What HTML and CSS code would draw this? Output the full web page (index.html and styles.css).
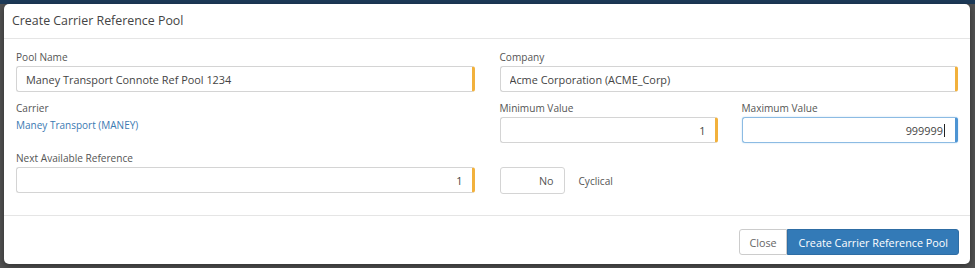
FILE: index.html
```html
<!DOCTYPE html>
<html lang="en">
  <head>
    <meta charset="UTF-8" />
    <title>Create Carrier Reference Pool</title>
    <link rel="stylesheet" href="styles.css">
  </head>
  <body>
    <div class="backdrop-bar"></div>
    <div class="modal">
      <div class="modal-header">
        <h4>Create Carrier Reference Pool</h4>
      </div>
      <form class="modal-body" action="#">
        <div class="col">
          <div class="form-group">
            <label for="pool-name">Pool Name</label>
            <input type="text" id="pool-name" class="required" value="Maney Transport Connote Ref Pool 1234" />
          </div>
          <div class="form-group carrier">
            <label>Carrier</label>
            <a href="#">Maney Transport (MANEY)</a>
          </div>
          <div class="form-group last">
            <label for="next-ref">Next Available Reference</label>
            <input type="text" id="next-ref" class="required num" value="1" />
          </div>
        </div>
        <div class="col">
          <div class="form-group">
            <label for="company">Company</label>
            <input type="text" id="company" class="required" value="Acme Corporation (ACME_Corp)" />
          </div>
          <div class="row">
            <div class="form-group">
              <label for="min-value">Minimum Value</label>
              <input type="text" id="min-value" class="required num" value="1" />
            </div>
            <div class="form-group">
              <label for="max-value">Maximum Value</label>
              <div class="caret-wrap">
                <input type="text" id="max-value" class="required num focused" value="999999" />
                <span class="caret"></span>
              </div>
            </div>
          </div>
          <div class="toggle-row">
            <span class="toggle">No</span>
            <span class="toggle-label">Cyclical</span>
          </div>
        </div>
      </form>
      <div class="modal-footer">
        <button type="button" class="btn">Close</button>
        <button type="button" class="btn btn-primary">Create Carrier Reference Pool</button>
      </div>
    </div>
  </body>
</html>
```

FILE: styles.css
```css
* {
  margin: 0;
  padding: 0;
  box-sizing: border-box;
}

body {
  font-family: "Open Sans", "Liberation Sans", sans-serif;
  background: #515151;
  color: #333;
  height: 268px;
  overflow: hidden;
  padding: 4px 5px 0 4px;
}

.backdrop-bar {
  position: absolute;
  top: 0;
  left: 0;
  right: 0;
  height: 4px;
  background: #1d3a58;
}

.modal {
  position: relative;
  background: #fff;
  border-radius: 5px;
  width: 966px;
  height: 260px;
  box-shadow: 0 2px 6px rgba(0, 0, 0, 0.4);
}

.modal-header {
  height: 35px;
  padding: 8px 8px 0;
  border-bottom: 1px solid #e5e5e5;
}

.modal-header h4 {
  font-size: 12.4px;
  font-weight: 400;
  line-height: 18px;
  color: #444;
}

.modal-body {
  display: grid;
  grid-template-columns: 1fr 1fr;
  column-gap: 25px;
  padding: 10px 12px 21px;
  border-bottom: 1px solid #e5e5e5;
}

.col {
  display: flex;
  flex-direction: column;
}

.form-group {
  display: flex;
  flex-direction: column;
  margin-bottom: 8px;
}

.form-group.last {
  margin-bottom: 0;
}

.form-group label {
  font-size: 10.1px;
  line-height: 16px;
  color: #555;
  margin-bottom: 1px;
}

.form-group input {
  height: 26px;
  width: 100%;
  padding: 0 9px;
  border: 1px solid #d4d4d4;
  border-radius: 3px;
  font-family: inherit;
  font-size: 10.9px;
  color: #444;
  outline: none;
  background: #fff;
}

.form-group input.required {
  border-right: 3px solid #f2b13c;
}

.form-group input.num {
  text-align: right;
}

.form-group input.focused {
  border-color: #8cbbe3;
  border-right-color: #4d94d3;
  padding-right: 12px;
  box-shadow: 0 0 2px rgba(102, 175, 233, 0.4);
}

.caret-wrap {
  position: relative;
}

.caret {
  position: absolute;
  right: 13px;
  top: 7px;
  width: 1px;
  height: 13px;
  background: #222;
}

.carrier {
  margin-bottom: 17px;
}

.carrier a {
  font-size: 10px;
  line-height: 16px;
  color: #3b7ab2;
  text-decoration: none;
}

.row {
  display: grid;
  grid-template-columns: 218px 1fr;
  column-gap: 24px;
}

.row .form-group {
  margin-bottom: 24px;
}

.toggle-row {
  display: flex;
  align-items: center;
  gap: 14px;
}

.toggle {
  width: 65px;
  height: 27px;
  border: 1px solid #d4d4d4;
  border-radius: 3px;
  font-size: 10.8px;
  color: #555;
  display: flex;
  align-items: center;
  justify-content: flex-end;
  padding-right: 10px;
}

.toggle-label {
  font-size: 10.1px;
  color: #555;
}

.modal-footer {
  display: flex;
  justify-content: flex-end;
  padding: 13px 11px 0;
}

.btn {
  height: 26px;
  padding: 0 9px;
  font-family: inherit;
  font-size: 10.8px;
  border: 1px solid #ccc;
  background: #fff;
  color: #666;
  border-radius: 3px 0 0 3px;
  cursor: pointer;
}

.btn-primary {
  padding: 0 10px 0 11px;
  background: #337ab7;
  border-color: #2e6da4;
  color: #fff;
  border-radius: 0 3px 3px 0;
}
```
